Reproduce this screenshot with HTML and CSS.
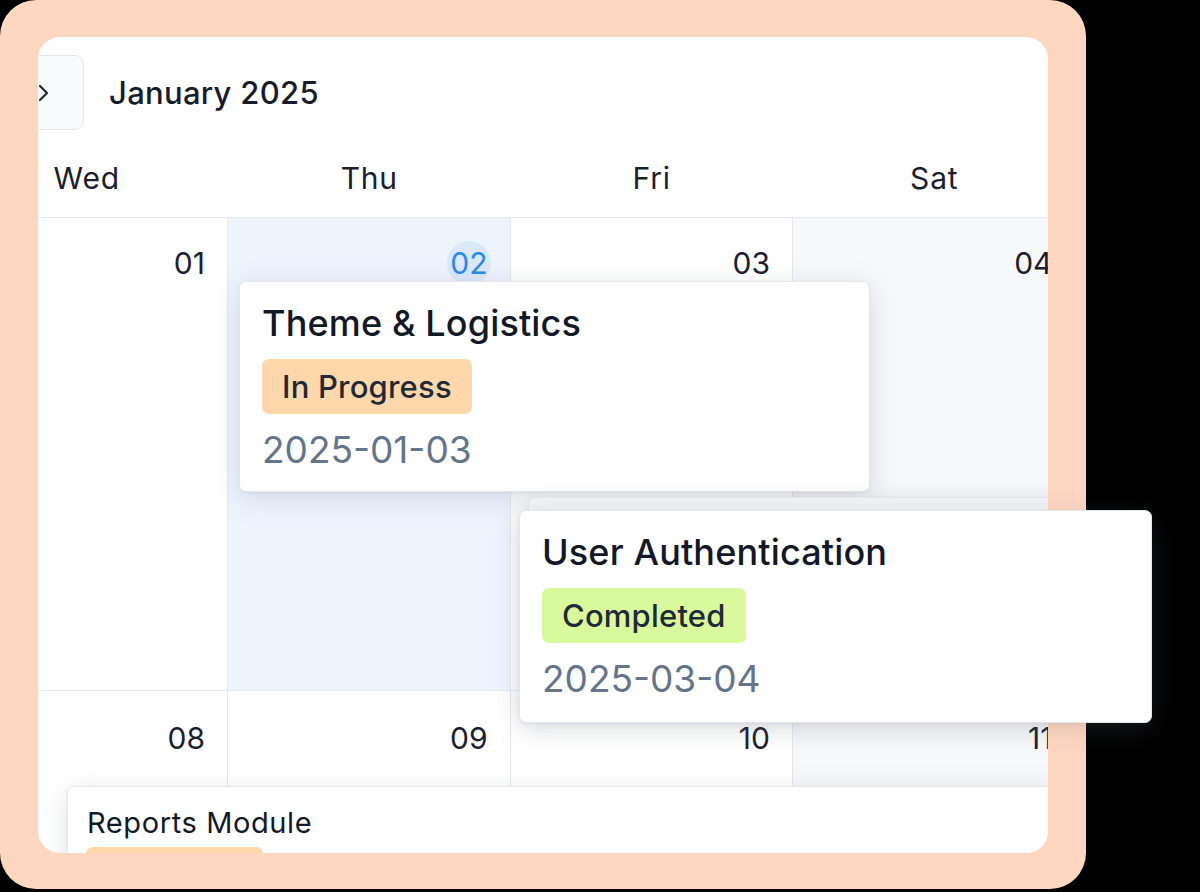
FILE: index.html
```html
<!DOCTYPE html>
<html lang="en">
<head>
<meta charset="utf-8">
<title>Calendar</title>
<link rel="stylesheet" href="styles.css">
</head>
<body>
<div class="frame">
  <div class="panel">
    <div class="toolbar">
      <button class="nav-btn" aria-label="Next month">
        <svg width="28" height="28" viewBox="0 0 28 28" fill="none" stroke="#1f2937" stroke-width="2.2" stroke-linecap="round" stroke-linejoin="round"><path d="M11 7l7 7-7 7"/></svg>
      </button>
      <h1 class="month">January 2025</h1>
    </div>
    <div class="calendar">
      <div class="weekdays">
        <div class="weekday">Wed</div>
        <div class="weekday">Thu</div>
        <div class="weekday">Fri</div>
        <div class="weekday">Sat</div>
      </div>
      <div class="week week-first">
        <div class="day"><span class="num">01</span></div>
        <div class="day today"><span class="num">02</span></div>
        <div class="day"><span class="num">03</span></div>
        <div class="day weekend"><span class="num">04</span></div>
      </div>
      <div class="week week-second">
        <div class="day"><span class="num">08</span></div>
        <div class="day"><span class="num">09</span></div>
        <div class="day"><span class="num">10</span></div>
        <div class="day weekend"><span class="num">11</span></div>
      </div>
    </div>

    <div class="event event-theme">
      <div class="event-title">Theme &amp; Logistics</div>
      <span class="badge badge-progress">In Progress</span>
      <div class="event-date">2025-01-03</div>
    </div>

    <div class="event event-ghost"></div>

    <div class="event event-small event-reports">
      <div class="event-title">Reports Module</div>
      <span class="badge badge-progress">In Progress</span>
      <div class="event-date">2025-01-10</div>
    </div>
  </div>

  <div class="event event-drag">
    <div class="event-title">User Authentication</div>
    <span class="badge badge-done">Completed</span>
    <div class="event-date">2025-03-04</div>
  </div>
</div>
</body>
</html>
```

FILE: styles.css
```css
* {
  box-sizing: border-box;
}

html, body {
  margin: 0;
  padding: 0;
  background: #000;
  width: 1200px;
  height: 892px;
  overflow: hidden;
  font-family: "Inter", "Liberation Sans", sans-serif;
  color: #1a2030;
}

.frame {
  position: relative;
  width: 1086px;
  height: 889px;
  background: #fed7c1;
  border-radius: 36px;
  padding: 37px 38px 36px 38px;
}

.panel {
  position: relative;
  width: 1010px;
  height: 816px;
  background: #fff;
  border-radius: 22px;
  overflow: hidden;
}

/* toolbar */
.toolbar {
  display: flex;
  align-items: center;
  gap: 25px;
  padding-top: 18px;
  margin-left: -29px;
}

.nav-btn {
  width: 75px;
  height: 75px;
  display: flex;
  align-items: center;
  justify-content: center;
  padding: 0 8px 0 0;
  background: #f8fafc;
  border: 1px solid #e3e8ef;
  border-radius: 9px;
}

.month {
  margin: 0;
  font-size: 31px;
  font-weight: 500;
  line-height: 40px;
  color: #161c2b;
  letter-spacing: 0.3px;
}

/* calendar grid */
.calendar {
  margin-left: -92.5px;
  width: 1130px;
}

.weekdays {
  display: grid;
  grid-template-columns: repeat(4, 282.5px);
  height: 79px;
  margin-top: 9px;
  border-bottom: 1px solid #e5e8ee;
  align-items: center;
}

.weekday {
  text-align: center;
  font-size: 30px;
  font-weight: 400;
  color: #1a2030;
  letter-spacing: 0.8px;
}

.week {
  display: grid;
  grid-template-columns: repeat(4, 282.5px);
  border-bottom: 1px solid #e5e8ee;
}

.week-first {
  height: 473px;
}

.week-second {
  height: 473px;
}

.day {
  border-right: 1px solid #e5e8ee;
  padding: 27px 22px 0 0;
  text-align: right;
  font-size: 30px;
  line-height: 36px;
  color: #1a2030;
}

.week-second .day {
  padding-top: 29px;
}

.day.today {
  background: #edf4fe;
}

.day.weekend {
  background: #f7f8fa;
}

.num {
  position: relative;
  display: inline-block;
  z-index: 0;
}

.today .num {
  color: #2a8ae8;
}

.today .num::before {
  content: "";
  position: absolute;
  left: 50%;
  top: 50%;
  width: 44px;
  height: 44px;
  margin: -22px 0 0 -22px;
  border-radius: 50%;
  background: #dbe8fa;
  z-index: -1;
}

/* events */
.event {
  position: absolute;
  background: #fff;
  border: 1px solid #e4e7ec;
  border-radius: 7px;
  padding: 20px 22px;
  box-shadow: 0 6px 26px rgba(110, 116, 132, 0.22), 0 1px 3px rgba(0, 0, 0, 0.05);
}

.event-title {
  font-size: 36px;
  line-height: 42px;
  font-weight: 500;
  letter-spacing: 0.15px;
  color: #111827;
}

.badge {
  display: inline-flex;
  align-items: center;
  height: 55px;
  margin-top: 15px;
  padding: 0 20px;
  border-radius: 7px;
  font-size: 31px;
  font-weight: 500;
  letter-spacing: 0.2px;
  color: #1f2937;
}

.badge-progress {
  background: #fed7aa;
}

.badge-done {
  background: #d9f99d;
}

.event-date {
  margin-top: 14px;
  font-size: 37px;
  line-height: 44px;
  color: #64748b;
}

.event-theme {
  left: 201px;
  top: 244px;
  width: 631px;
  height: 211px;
}

.event-ghost {
  left: 490px;
  top: 460px;
  width: 631px;
  height: 211px;
  background: #f3f4f6;
}

.event-small {
  padding: 19px 19px;
}

.event-small .event-title {
  font-size: 29px;
  line-height: 34px;
  font-weight: 400;
  letter-spacing: 0.6px;
}

.event-small .badge {
  margin-top: 7px;
  margin-left: -1px;
  height: 46px;
  font-size: 25px;
}

.event-reports {
  left: 29px;
  top: 749px;
  width: 1000px;
  height: 200px;
}

.event-drag {
  left: 519px;
  top: 510px;
  width: 633px;
  height: 213px;
  z-index: 5;
}
```
